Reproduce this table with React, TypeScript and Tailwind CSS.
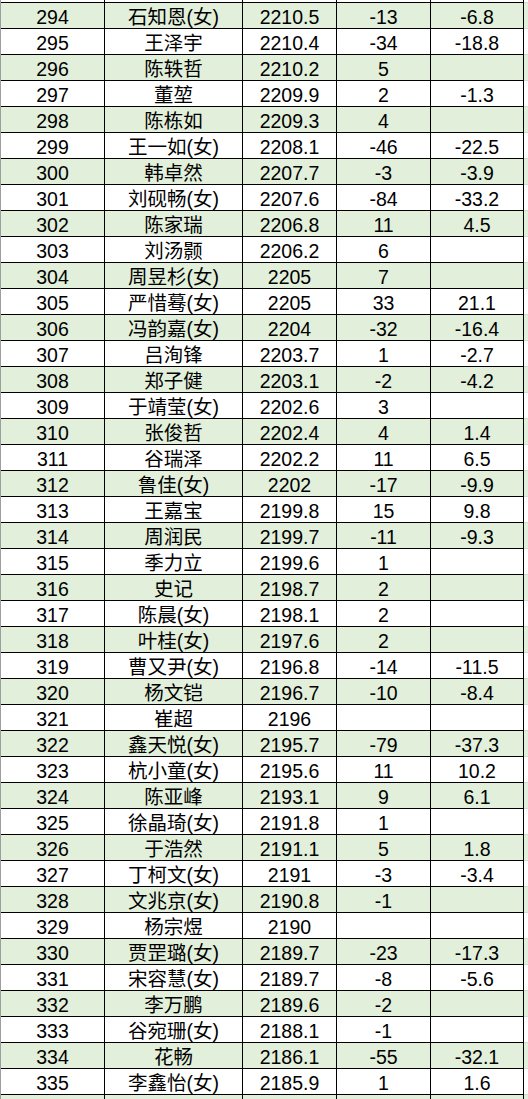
type Row = [number, string, string, string, string];

const rows: Row[] = [
  [294, '石知恩(女)', '2210.5', '-13', '-6.8'],
  [295, '王泽宇', '2210.4', '-34', '-18.8'],
  [296, '陈轶哲', '2210.2', '5', ''],
  [297, '董堃', '2209.9', '2', '-1.3'],
  [298, '陈栋如', '2209.3', '4', ''],
  [299, '王一如(女)', '2208.1', '-46', '-22.5'],
  [300, '韩卓然', '2207.7', '-3', '-3.9'],
  [301, '刘砚畅(女)', '2207.6', '-84', '-33.2'],
  [302, '陈家瑞', '2206.8', '11', '4.5'],
  [303, '刘汤颢', '2206.2', '6', ''],
  [304, '周昱杉(女)', '2205', '7', ''],
  [305, '严惜蓦(女)', '2205', '33', '21.1'],
  [306, '冯韵嘉(女)', '2204', '-32', '-16.4'],
  [307, '吕洵锋', '2203.7', '1', '-2.7'],
  [308, '郑子健', '2203.1', '-2', '-4.2'],
  [309, '于靖莹(女)', '2202.6', '3', ''],
  [310, '张俊哲', '2202.4', '4', '1.4'],
  [311, '谷瑞泽', '2202.2', '11', '6.5'],
  [312, '鲁佳(女)', '2202', '-17', '-9.9'],
  [313, '王嘉宝', '2199.8', '15', '9.8'],
  [314, '周润民', '2199.7', '-11', '-9.3'],
  [315, '季力立', '2199.6', '1', ''],
  [316, '史记', '2198.7', '2', ''],
  [317, '陈晨(女)', '2198.1', '2', ''],
  [318, '叶桂(女)', '2197.6', '2', ''],
  [319, '曹又尹(女)', '2196.8', '-14', '-11.5'],
  [320, '杨文铠', '2196.7', '-10', '-8.4'],
  [321, '崔超', '2196', '', ''],
  [322, '鑫天悦(女)', '2195.7', '-79', '-37.3'],
  [323, '杭小童(女)', '2195.6', '11', '10.2'],
  [324, '陈亚峰', '2193.1', '9', '6.1'],
  [325, '徐晶琦(女)', '2191.8', '1', ''],
  [326, '于浩然', '2191.1', '5', '1.8'],
  [327, '丁柯文(女)', '2191', '-3', '-3.4'],
  [328, '文兆京(女)', '2190.8', '-1', ''],
  [329, '杨宗煜', '2190', '', ''],
  [330, '贾罡璐(女)', '2189.7', '-23', '-17.3'],
  [331, '宋容慧(女)', '2189.7', '-8', '-5.6'],
  [332, '李万鹏', '2189.6', '-2', ''],
  [333, '谷宛珊(女)', '2188.1', '-1', ''],
  [334, '花畅', '2186.1', '-55', '-32.1'],
  [335, '李鑫怡(女)', '2185.9', '1', '1.6'],
];

const widths = ['w-[104px]', 'w-[138px]', 'w-[94px]', 'w-[94px]', 'w-[93px]'];

function Cell({ w, text }: { w: string; text: string }) {
  return (
    <div className={`${w} shrink-0 h-full box-border border-r border-b border-black text-center pt-[3px] leading-[22px] whitespace-nowrap overflow-hidden`}>
      {text}
    </div>
  );
}

function TableRow({ cells, green, h = 'h-[26px]' }: { cells: string[]; green: boolean; h?: string }) {
  return (
    <div className={`flex ${h} ${green ? 'bg-[#e2efda]' : 'bg-white'}`}>
      {widths.map((w, i) => (
        <Cell key={i} w={w} text={cells[i] ?? ''} />
      ))}
      <div className="flex-1 h-full box-border border-b border-[#cfdcc6]" />
    </div>
  );
}

export default function App() {
  return (
    <div
      className="w-[528px] h-[1099px] overflow-hidden bg-white text-black text-[19.5px] border-l border-[#9e9e9e]"
      style={{ fontFamily: '"Liberation Sans", Arial, "Noto Sans CJK SC", sans-serif' }}
    >
      {/* 293 行只露出底边 */}
      <div className="flex h-[3px] bg-white overflow-hidden">
        {widths.map((w, i) => (
          <div key={i} className={`${w} shrink-0 h-full box-border border-r border-b border-black`} />
        ))}
        <div className="flex-1 h-full box-border border-b border-[#cfdcc6]" />
      </div>
      {rows.map((r, idx) => (
        <TableRow key={r[0]} cells={[String(r[0]), r[1], r[2], r[3], r[4]]} green={idx % 2 === 0} />
      ))}
      <TableRow cells={['', '', '', '', '']} green />
    </div>
  );
}
